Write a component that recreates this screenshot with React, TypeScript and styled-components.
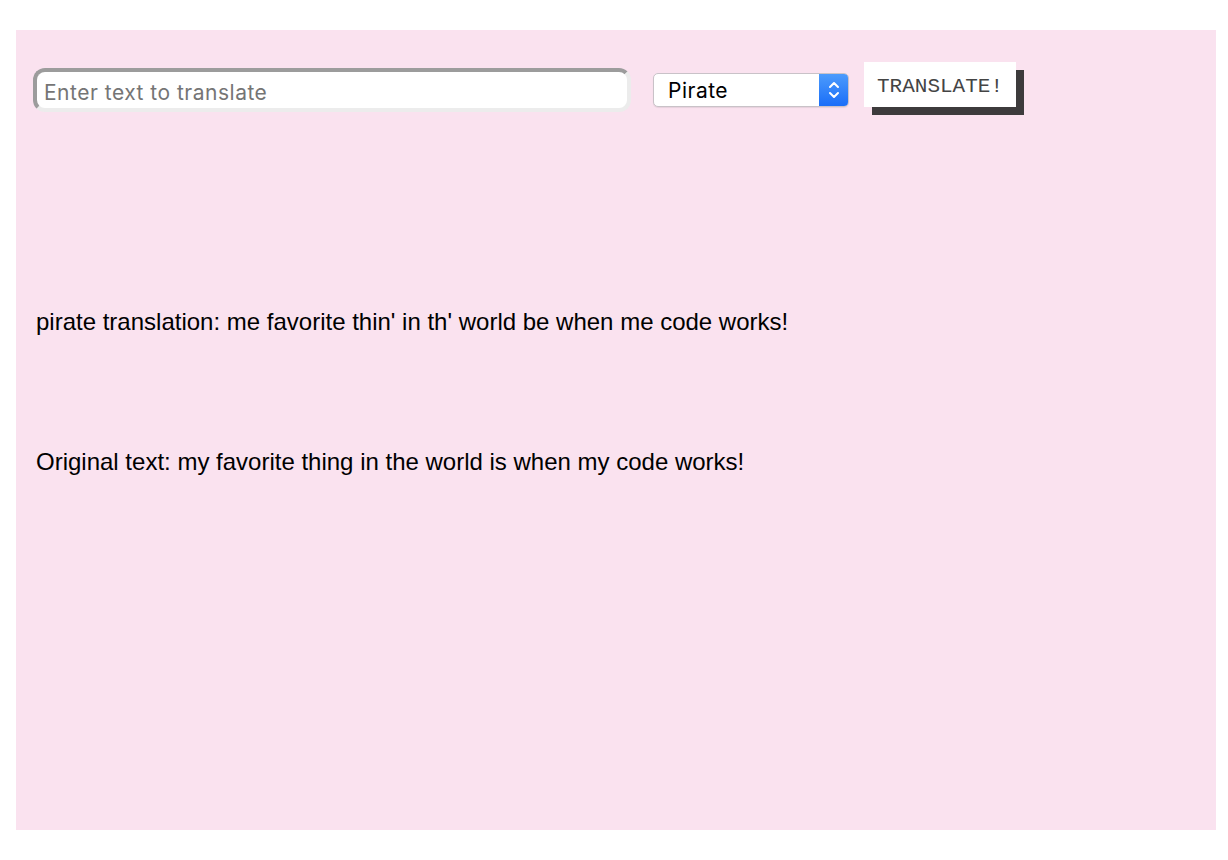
import styled, { createGlobalStyle } from 'styled-components';

const GlobalStyle = createGlobalStyle`
  html, body {
    margin: 0;
    padding: 0;
    background: #ffffff;
  }
`;

const Page = styled.div`
  padding: 30px 12px 30px 16px;
`;

const Panel = styled.main`
  background: #fae2ef;
  width: 1200px;
  height: 800px;
  box-sizing: border-box;
  padding: 32px 0 0 17px;
  font-family: "Liberation Sans", Arial, sans-serif;
  color: #000;
`;

const Toolbar = styled.div`
  display: flex;
  align-items: flex-start;
`;

const TextInput = styled.input`
  box-sizing: border-box;
  width: 598px;
  height: 44px;
  margin-top: 6px;
  padding: 4px 7px 0;
  border-width: 4px;
  border-style: solid;
  border-color: #9c9c9c #ececec #ececec #9c9c9c;
  border-radius: 12px;
  background: #fff;
  font-family: Inter, "Liberation Sans", Arial, sans-serif;
  font-size: 21px;
  letter-spacing: 0.5px;
  color: #000;
  outline: none;

  &::placeholder {
    color: #757575;
  }
`;

const SelectBox = styled.div`
  box-sizing: border-box;
  width: 196px;
  height: 34px;
  margin: 11px 0 0 22px;
  border: 1px solid #c9c2c8;
  border-radius: 5px;
  background: #fff;
  display: flex;
  align-items: center;
  overflow: hidden;
  box-shadow: 0 1px 1px rgba(0, 0, 0, 0.08);
`;

const SelectLabel = styled.span`
  flex: 1;
  padding-left: 14px;
  font-family: Inter, "Liberation Sans", Arial, sans-serif;
  font-size: 21px;
  letter-spacing: 0.5px;
  color: #000;
`;

const SelectArrow = styled.div`
  width: 29px;
  height: 100%;
  background: linear-gradient(#4c9bfc, #1a6ef8);
  display: flex;
  align-items: center;
  justify-content: center;
`;

const TranslateButton = styled.button`
  box-sizing: border-box;
  width: 152px;
  height: 45px;
  margin-left: 15px;
  border: none;
  background: #fff;
  box-shadow: 8px 8px 0 #3d3b3c;
  font-family: "Liberation Mono", monospace;
  font-size: 21px;
  color: #444;
  padding: 3px 0 0;
  cursor: pointer;
`;

const Output = styled.p`
  margin: 0;
  padding-left: 3px;
  font-size: 24px;
  line-height: 28px;
`;

const TranslationLine = styled(Output)`
  margin-top: 196px;
`;

const OriginalLine = styled(Output)`
  margin-top: 112px;
`;

function App() {
  return (
    <Page>
      <GlobalStyle />
      <Panel>
        <Toolbar>
          <TextInput placeholder="Enter text to translate" />
          <SelectBox>
            <SelectLabel>Pirate</SelectLabel>
            <SelectArrow>
              <svg width="12" height="20" viewBox="0 0 12 20" fill="none" stroke="#fff" strokeWidth="2" strokeLinecap="round" strokeLinejoin="round">
                <path d="M2 7 L6 3 L10 7" />
                <path d="M2 13 L6 17 L10 13" />
              </svg>
            </SelectArrow>
          </SelectBox>
          <TranslateButton>TRANSLATE!</TranslateButton>
        </Toolbar>
        <TranslationLine>pirate translation: me favorite thin' in th' world be when me code works!</TranslationLine>
        <OriginalLine>Original text: my favorite thing in the world is when my code works!</OriginalLine>
      </Panel>
    </Page>
  );
}

export default App;
